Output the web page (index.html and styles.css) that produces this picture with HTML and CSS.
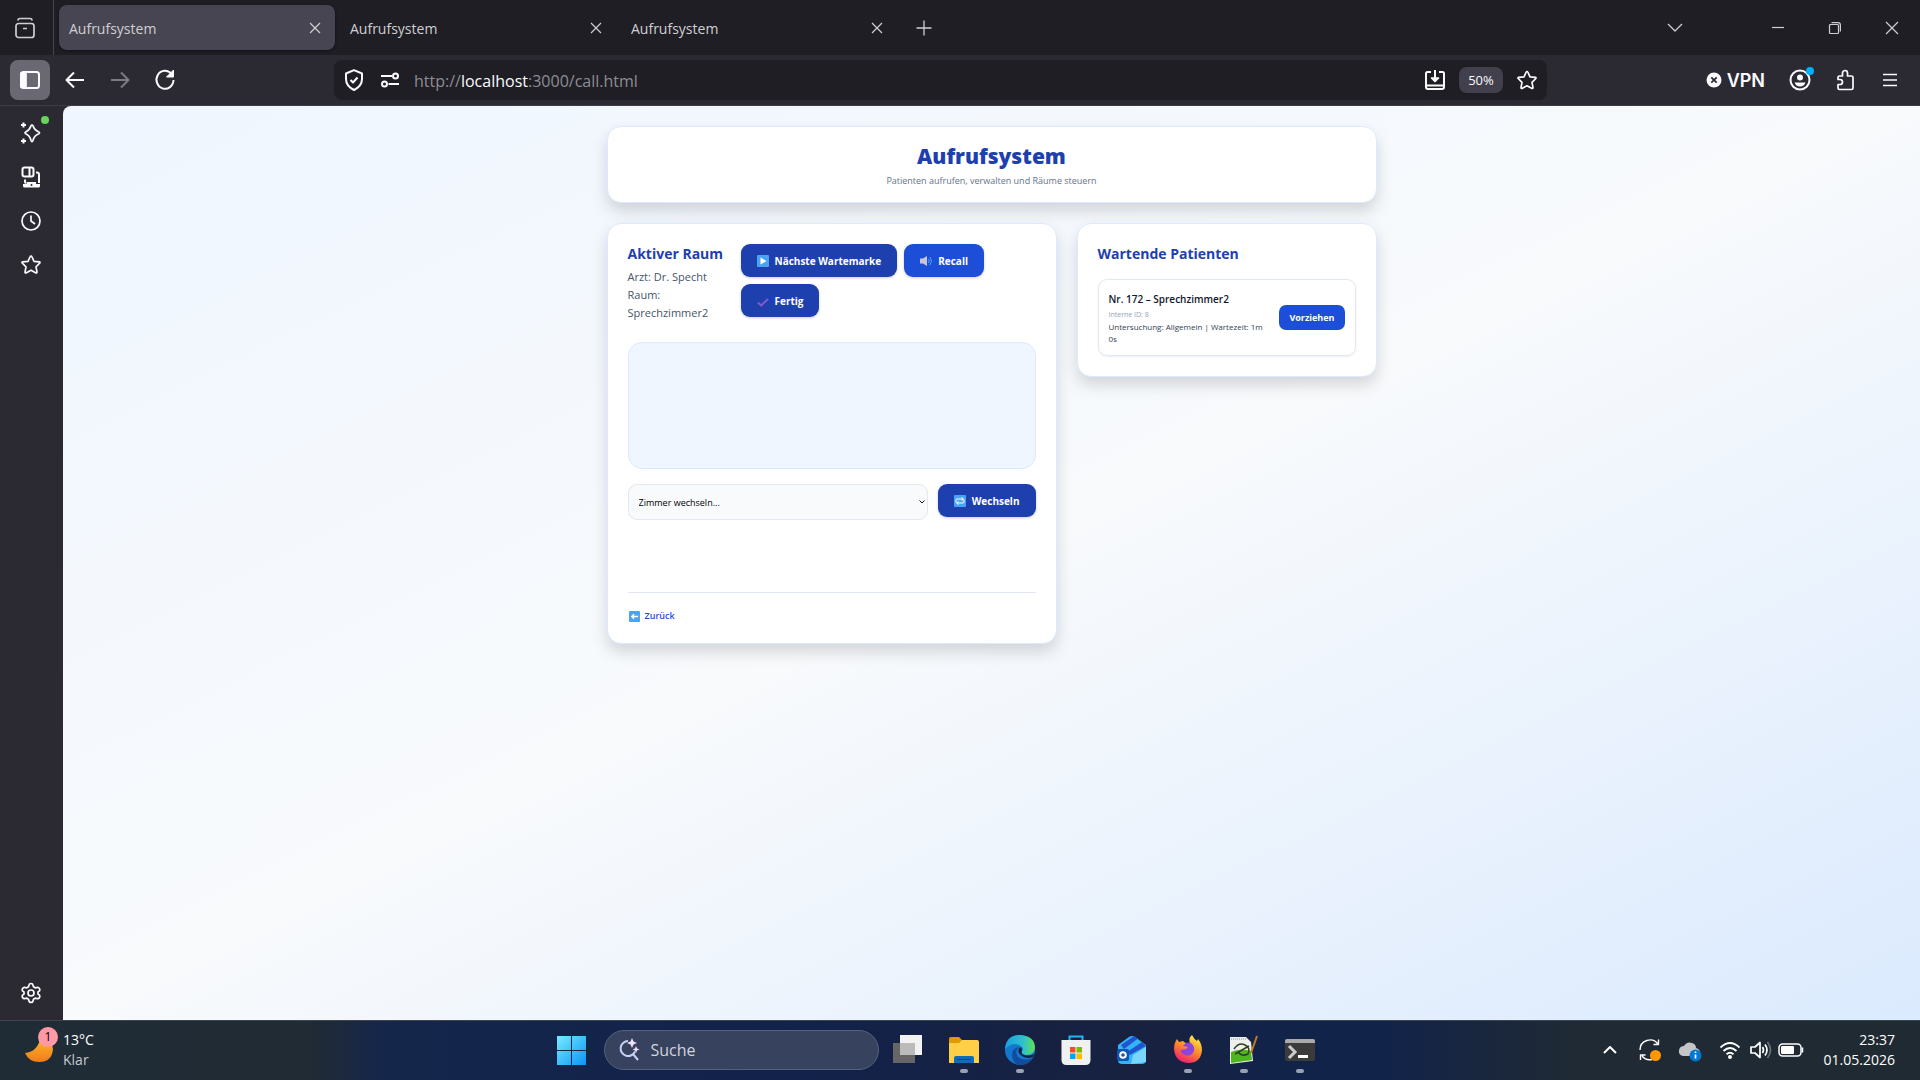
FILE: index.html
```html
<!DOCTYPE html>
<html lang="de">
<head>
    <meta charset="UTF-8">
    <meta name="viewport" content="width=device-width, initial-scale=1.0">
    <title>Aufrufsystem</title>
    <link rel="stylesheet" href="styles.css">
</head>
<body>
    <!-- Tabs -->
    <div class="tabstrip">
        <button class="tab-overview" aria-label="Tabs">
            <svg class="icon" viewBox="0 0 24 24"><rect x="3" y="7.500" width="18" height="14" rx="2.500"/><path d="M5 4.500Q5 2.500 7 2.500H17Q19 2.500 19 4.500M10 12.500h4"/></svg>
        </button>
        <div class="tab active"><span>Aufrufsystem</span><button aria-label="Tab schließen"><svg class="icon small" viewBox="0 0 12 12"><path d="M1 1l10 10M11 1L1 11"/></svg></button></div>
        <div class="tab"><span>Aufrufsystem</span><button aria-label="Tab schließen"><svg class="icon small" viewBox="0 0 12 12"><path d="M1 1l10 10M11 1L1 11"/></svg></button></div>
        <div class="tab"><span>Aufrufsystem</span><button aria-label="Tab schließen"><svg class="icon small" viewBox="0 0 12 12"><path d="M1 1l10 10M11 1L1 11"/></svg></button></div>
        <button class="new-tab" aria-label="Neuer Tab"><svg class="icon medium" viewBox="0 0 16 16"><path d="M8 0.500v15M0.500 8h15"/></svg></button>
        <div class="window-buttons">
            <button class="tab-list" aria-label="Alle Tabs"><svg class="icon medium" viewBox="0 0 16 16"><path d="M1 4l7 7 7-7"/></svg></button>
            <button aria-label="Minimieren"><svg class="icon small" viewBox="0 0 12 12"><path d="M0 5.500h12"/></svg></button>
            <button aria-label="Verkleinern"><svg class="icon small" viewBox="0 0 12 12"><rect x="0.500" y="2.500" width="9" height="9" rx="1"/><path d="M2.500 .7H9Q11.400 .7 11.400 3V9.500"/></svg></button>
            <button aria-label="Schließen"><svg class="icon small" viewBox="0 0 12 12"><path d="M0 0l12 12M12 0L0 12"/></svg></button>
        </div>
    </div>

    <!-- Navigation -->
    <div class="toolbar">
        <button class="tool sidebar-toggle" aria-label="Seitenleiste"><svg class="icon" viewBox="0 0 24 24"><rect x="3" y="4" width="18" height="16" rx="2.500" stroke-width="2"/><path d="M3 5h5v14H3z" fill="currentColor"/></svg></button>
        <button class="tool" aria-label="Zurück"><svg class="icon" viewBox="0 0 24 24"><path d="M21 12H4M11 4.500L3.500 12l7.500 7.500" stroke-width="2"/></svg></button>
        <button class="tool disabled" aria-label="Vor"><svg class="icon" viewBox="0 0 24 24"><path d="M3 12h17M13 4.500l7.500 7.500-7.500 7.500" stroke-width="2"/></svg></button>
        <button class="tool" aria-label="Neu laden"><svg class="icon" viewBox="0 0 24 24"><path d="M18.500 6A8.500 9 0 1 0 20.500 12" stroke-width="2"/><path d="M20.500 2v7h-7z" fill="currentColor" stroke-width="1"/></svg></button>
        <div class="urlbar">
            <svg class="icon" viewBox="0 0 24 24"><path d="M12 2.200l8 3.300v5.500c0 5-3 8.500-8 11-5-2.500-8-6-8-11V5.500z" stroke-width="2"/><path d="M8.500 12l2.500 2.500 4.500-5" stroke-width="2"/></svg>
            <svg class="icon" viewBox="0 0 24 24"><path d="M3 8h11M10.500 16H21" stroke-width="2"/><circle cx="17.500" cy="8" r="2.500" stroke-width="2"/><circle cx="6.500" cy="16" r="2.500" stroke-width="2"/></svg>
            <div class="url">http://<b>localhost</b>:3000/call.html</div>
            <button class="plain" aria-label="App installieren"><svg class="icon" viewBox="0 0 24 24"><path d="M8 4H4.500Q3 4 3 5.500V19Q3 21 5 21H19Q21 21 21 19V5.500Q21 4 19.500 4H16M3 17.500h18M12 2v11" stroke-width="2"/><path d="M8.500 10h7L12 13.500z" fill="currentColor"/></svg></button>
            <button class="zoom-level">50%</button>
            <button class="plain" aria-label="Lesezeichen"><svg class="icon" viewBox="0 0 24 24"><path d="M12 3.500q.6 0 .8.500l2.200 4.800 5.300.6q1.100.2.500 1.100l-3.800 3.800 1 5.300q0 1.200-1 .8L12 17.800l-5 2.600q-1 .4-1-.8l1-5.300-3.800-3.800q-.6-.9.500-1.100L9 8.800 11.200 4q.2-.5.8-.5z"/></svg></button>
        </div>
        <div class="browser-tools">
            <button class="vpn"><svg class="vpn-icon" viewBox="0 0 16 16"><circle cx="8" cy="8" r="7.500" fill="#fbfbfe"/><path d="M5.300 5.300l5.400 5.400M10.700 5.300l-5.400 5.400" stroke="#2b2a33" stroke-width="1.800"/></svg>VPN</button>
            <button class="tool account" aria-label="Konto"><svg class="icon" viewBox="0 0 24 24"><circle cx="12" cy="12" r="9.500" stroke-width="2"/><circle cx="12" cy="9.500" r="3" fill="currentColor" stroke="none"/><path d="M6.500 14.500h11q-1.500 4-5.500 4t-5.500-4z" fill="currentColor" stroke="none"/></svg><i class="dot blue"></i></button>
            <button class="tool" aria-label="Erweiterungen"><svg class="icon" viewBox="0 0 24 24"><path d="M9.500 8V5a2.500 2.500 0 0 1 5 0v3h4q1.500 0 1.500 1.500V20q0 1.500-1.500 1.500h-12Q5 21.500 5 20v-3.500h2a2.500 2.500 0 0 0 0-5H5v-2Q5 8 6.500 8z"/></svg></button>
            <button class="tool" aria-label="Menü"><svg class="icon" viewBox="0 0 24 24"><path d="M5 6.500h14M5 12h14M5 17.500h14"/></svg></button>
        </div>
    </div>

    <div class="window">
        <nav class="sidebar">
            <button aria-label="KI-Chatbot"><svg class="icon" viewBox="0 0 24 24"><path d="M13 4q.7 0 1 .8 1.200 4.200 5.800 6.200 1.500.8 0 1.800-4.600 1.700-5.800 6.500-.4 1.300-1 1.300t-1-1.300q-1.200-4.800-5.300-6.500-1.400-1 0-1.800Q10.800 9 12 4.800q.3-.8 1-.8z"/><path d="M4.500 1.500v5M2 4h5M4.500 17.500v5M2 20h5" stroke-width="2"/></svg><i class="dot green"></i></button>
            <button aria-label="Synchronisierte Tabs"><svg class="icon" viewBox="0 0 24 24"><rect x="3.500" y="2.500" width="11" height="9" rx="2" stroke-width="2"/><path d="M10.500 3v8M17 7.500h1q2 0 2 2v8.500M6 14.500v2q0 1.500 1.500 1.500" stroke-width="2"/><path d="M4 19h17v2q0 1.500-1.500 1.500h-14Q4 22.500 4 21zM8 17h9v3H8z" fill="currentColor" stroke="none"/><circle cx="12.500" cy="20" r="1" fill="#2b2a33" stroke="none"/></svg></button>
            <button aria-label="Chronik"><svg class="icon" viewBox="0 0 24 24"><circle cx="12" cy="12" r="9"/><path d="M12 6.500V12l4 3"/></svg></button>
            <button aria-label="Lesezeichen"><svg class="icon" viewBox="0 0 24 24"><path d="M12 3q.6 0 .8.500l2.200 4.800 5.300.6q1.100.2.500 1.100l-3.800 3.800 1 5.300q0 1.200-1 .8L12 17.300l-5 2.600q-1 .4-1-.8l1-5.300-3.800-3.800q-.6-.9.500-1.100L9 8.300 11.200 3.500q.2-.5.8-.5z"/></svg></button>
            <button class="settings" aria-label="Einstellungen"><svg class="icon" viewBox="0 0 24 24"><path d="M10 4q.3-1.500 2-1.500T14 4l.5 1.800 2 1.100 2-.6q1.300 0 2 1.300t0 2.300L19 11v2l1.500 1.200q.7 1 0 2.300t-2 1.200l-2-.6-2 1.100L14 20q-.3 1.500-2 1.500T10 20l-.5-1.800-2-1.100-2 .6q-1.300 0-2-1.200t0-2.300L5 13v-2L3.500 9.900q-.7-1 0-2.300t2-1.300l2 .6 2-1.100z"/><circle cx="12" cy="12" r="3"/></svg></button>
        </nav>

        <main class="page">
            <div class="container">
                <header class="card header">
                    <h1>Aufrufsystem</h1>
                    <p>Patienten aufrufen, verwalten und Räume steuern</p>
                </header>

                <div class="columns">
                    <section class="card">
                        <div class="room">
                            <div class="room-info">
                                <h2>Aktiver Raum</h2>
                                <p>Arzt: Dr. Specht</p>
                                <p>Raum: Sprechzimmer2</p>
                            </div>
                            <div class="actions">
                                <button class="btn"><svg class="emoji" viewBox="0 0 12 12"><rect width="12" height="12" rx="1" fill="#4ba3f3"/><path d="M3.500 2.500l6 3.500-6 3.500z" fill="#fff"/></svg>Nächste Wartemarke</button>
                                <button class="btn light"><svg class="emoji" viewBox="0 0 12 12"><path d="M0 3.500h3L7 1v10L3 8.500H0z" fill="#c9c5d3"/><path d="M8.500 4q1.500 2 0 4M10 2q3 4 0 8" fill="none" stroke="#4ba3f3"/></svg>Recall</button>
                                <button class="btn"><svg class="emoji" viewBox="0 0 12 12"><path d="M1 7.500l3.200 3L11 4" fill="none" stroke="#8259c8" stroke-width="2"/></svg>Fertig</button>
                            </div>
                        </div>

                        <div class="current"></div>

                        <div class="switch-room">
                            <div class="select">
                                <select aria-label="Zimmer wechseln">
                                    <option>Zimmer wechseln...</option>
                                </select>
                                <svg viewBox="0 0 6 4"><path d="M.5 .5L3 3 5.500 .5" fill="none" stroke="#111"/></svg>
                            </div>
                            <button class="btn"><svg class="emoji" viewBox="0 0 12 12"><rect width="12" height="12" rx="1" fill="#4ba3f3"/><path d="M2 7.500V5q0-1 1-1h6M10 4.500V7q0 1-1 1H3M7.500 2.500L9.500 4 7.500 5.500M4.500 6.500L2.500 8l2 1.500" fill="none" stroke="#fff"/></svg>Wechseln</button>
                        </div>

                        <div class="card-footer">
                            <a href="#"><svg class="emoji" viewBox="0 0 12 12"><rect width="12" height="12" rx="1" fill="#4ba3f3"/><path d="M10 6H3M5.500 3.500L3 6l2.500 2.500" fill="none" stroke="#fff" stroke-width="1.500"/></svg>Zurück</a>
                        </div>
                    </section>

                    <section class="card">
                        <h2>Wartende Patienten</h2>
                        <div class="patient">
                            <div class="patient-info">
                                <h3>Nr. 172 – Sprechzimmer2</h3>
                                <p class="intern">Interne ID: 8</p>
                                <p>Untersuchung: Allgemein | Wartezeit: 1m 0s</p>
                            </div>
                            <button class="btn-small">Vorziehen</button>
                        </div>
                    </section>
                </div>
            </div>
        </main>
    </div>

    <!-- Taskleiste -->
    <footer class="taskbar">
        <div class="weather">
            <div class="moon">
                <svg viewBox="0 0 28 28"><defs><linearGradient id="moon" x2="0" y2="1"><stop offset="0" stop-color="#fbc02d"/><stop offset="1" stop-color="#f27a1a"/></linearGradient></defs><path d="M0 17q13-1 16-17Q28 3 28 13q-1 13-14 13Q4 26 0 17z" fill="url(#moon)"/></svg>
                <span class="badge">1</span>
            </div>
            <div>13°C<br><span class="muted">Klar</span></div>
        </div>

        <div class="apps">
            <button class="app start" aria-label="Start"><svg viewBox="0 0 30 30"><defs><linearGradient id="win" gradientUnits="userSpaceOnUse" x2="30" y2="30"><stop offset="0" stop-color="#7aefff"/><stop offset="1" stop-color="#0a93f5"/></linearGradient></defs><path d="M1 1h14v14H1zM16 1h14v14H16zM1 16h14v14H1zM16 16h14v14H16z" fill="url(#win)"/></svg></button>
            <label class="search">
                <svg viewBox="0 0 24 24"><path d="M11 3a7.500 7.500 0 1 0 7 10.500M16 16l5 6" fill="none" stroke="#c3d2f5" stroke-width="2"/><path d="M15 0l1.500 3.500L20 5l-3.500 1.500L15 10l-1.500-3.500L10 5l3.500-1.500zM19 8l1 2.500 2.500 1-2.500 1-1 2.500-1-2.500-2.500-1 2.500-1z" fill="#f0e2ff"/></svg>
                <input type="text" placeholder="Suche" aria-label="Suche">
            </label>
            <button class="app" aria-label="Taskansicht"><svg viewBox="0 0 30 30"><rect y="8" width="22" height="20" fill="#666"/><rect x="7" width="22" height="20" fill="#f2f2f2"/><path d="M7 8h15v12H7z" fill="#bbb"/></svg></button>
            <button class="app open" aria-label="Explorer"><svg viewBox="0 0 30 30"><path d="M0 4q0-2 2-2h8l3 3v6H0z" fill="#dd9b06"/><path d="M0 8h10l3-3h15q2 0 2 2v21H0z" fill="#ffcf48"/><path d="M5 28v-5q0-2 2-2h16q2 0 2 2v5z" fill="#0f6cbd"/><path d="M8 24.500h14" stroke="#0a4a86"/></svg></button>
            <button class="app open" aria-label="Edge"><svg viewBox="0 0 30 30"><defs><linearGradient id="edge"><stop offset="0" stop-color="#1a9fe0"/><stop offset=".6" stop-color="#2fc0cf"/><stop offset="1" stop-color="#62e052"/></linearGradient></defs><circle cx="15" cy="15" r="15" fill="#1377ce"/><path d="M0 14Q1 0 15 0q15 1 15 13-1 7-8 7-6 0-5-4 2-2 0-4-8-7-17 2z" fill="url(#edge)"/><path d="M14 12q-5 4-1 10 6 5 15 1-5 8-15 7Q7 27 7 20q0-7 7-8z" fill="#104e9d"/><path d="M16 12q-4 2-2 6 5 7 14 4l1-3q-6 3-12 0-1-2 0-4z" fill="#14224a"/></svg></button>
            <button class="app" aria-label="Store"><svg viewBox="0 0 30 30"><path d="M8.500 6V1.500h13V6" fill="none" stroke="#27b4f2" stroke-width="2"/><path d="M.5 5h29v20q0 5-5 5h-19q-5 0-5-5z" fill="#f1f1f1"/><path d="M9 12h5.500v5.500H9z" fill="#f25022"/><path d="M15.500 12H21v5.500h-5.500z" fill="#7fba00"/><path d="M9 18.500h5.500V24H9z" fill="#00a4ef"/><path d="M15.500 18.500H21V24h-5.500z" fill="#ffb900"/></svg></button>
            <button class="app" aria-label="Outlook"><svg viewBox="0 0 30 30"><path d="M1 10L12 2q3-2 6 0l11 8v15q0 4-4 4H5q-4 0-4-4z" fill="#31b5f5"/><path d="M4 10L17 1l4 2.500L7 14zM10 17L25 7l4 4-16 9z" fill="#2354cf"/><path d="M16 20l13-8v15L14 29z" fill="#7bd5ff"/><rect y="14" width="12" height="12" rx="2" fill="#0e54b5"/><circle cx="6" cy="20" r="2.800" fill="none" stroke="#fff" stroke-width="2"/></svg></button>
            <button class="app open" aria-label="Firefox"><svg viewBox="0 0 30 30"><defs><linearGradient id="fox" x1=".8" x2=".3" y2="1"><stop offset="0" stop-color="#fff44f"/><stop offset=".5" stop-color="#ff8a25"/><stop offset="1" stop-color="#f0187a"/></linearGradient></defs><path d="M1 14Q1 8 4 4l2 3 4-1 4 3 3-1q-2-5 2-8 2 4 5 6l1-2q4 5 4 11-1 13-14 13Q2 27 1 14z" fill="url(#fox)"/><path d="M10 11q3-5 8-3 4 3 3 8-3 6-9 4-5-2-4-5l5-1 2-2z" fill="#8c45dd"/></svg></button>
            <button class="app open" aria-label="Notepad++"><svg viewBox="0 0 30 30"><path d="M1 2h16l5 5 2 19L1 29z" fill="#eef0ec"/><path d="M2 17q9-4 20-1l1 9-21 3z" fill="#4db51e"/><path d="M5 14q5-7 11-4t3 9q-6 3-10-2M6 19l14-8" fill="none" stroke="#2f4026" stroke-width="1.500"/><path d="M2 4h15" stroke="#8c9399" stroke-dasharray="1 1"/><path d="M28 1l-6 17" stroke="#c27a1c" stroke-width="2"/></svg></button>
            <button class="app open" aria-label="Terminal"><svg viewBox="0 0 30 30"><rect y="4" width="30" height="22" rx="2" fill="#3b3b3b"/><path d="M0 8V6q0-2 2-2h26q2 0 2 2v2z" fill="#aaa"/><path d="M4 11l6 6-6 6" fill="none" stroke="#ccc" stroke-width="3"/><path d="M13 21.500h10" stroke="#fff" stroke-width="3"/></svg></button>
        </div>

        <div class="tray">
            <svg class="icon" viewBox="0 0 24 24"><path d="M6 15l6-6 6 6" stroke-width="2"/></svg>
            <svg class="icon" viewBox="0 0 24 24"><path d="M2 12A10 10 0 0 1 20 6M20.500 1.500v5h-5M14 21.500A10 10 0 0 1 4 18M2.500 22v-5h5" stroke-width="1.400"/><circle cx="17.500" cy="17.500" r="5.500" fill="#ff9800" stroke="none"/></svg>
            <svg class="icon" viewBox="0 0 24 24"><path d="M5 18Q0 17 1 12q1-4 5-4 3-5 8-3 4 1 4 5 4 1 4 5l-3 3z" fill="#c4c5c7" stroke="none"/><circle cx="17.500" cy="17.500" r="6" fill="#0078d4" stroke="none"/><path d="M17.500 16.500v4M17.500 13.500v1.500"/></svg>
            <div class="status">
                <svg class="icon" viewBox="0 0 24 24"><path d="M2.500 9.500q9.500-9 19 0M5.500 13q6.500-6 13 0M8.500 16.300q3.500-3 7 0" stroke-width="1.800"/><circle cx="12" cy="19" r="2" fill="currentColor" stroke="none"/></svg>
                <svg class="icon" viewBox="0 0 24 24"><path d="M3 9h4l5-4.500v15L7 15H3z"/><path d="M14.500 9q2 3 0 6M17 6.500q4 5.500 0 11"/><path d="M19.500 4q6 8 0 16" stroke="#66707a"/></svg>
                <svg class="battery" viewBox="0 0 26 14"><rect x="1" y="1" width="22" height="12" rx="3.500" fill="none" stroke="#fff" stroke-width="1.500"/><rect x="3" y="3" width="13" height="8" rx="1" fill="#fff"/><path d="M24.500 4.500v5" stroke="#fff" stroke-width="1.500"/></svg>
            </div>
            <div class="clock">23:37<br>01.05.2026</div>
        </div>
    </footer>
</body>
</html>
```
FILE: styles.css
```css
* {
    box-sizing: border-box;
}
body {
    margin: 0;
    height: 100vh;
    display: flex;
    flex-direction: column;
    font-family: "Open Sans", "Noto Sans", sans-serif;
    background-color: #2b2a33;
    color: #fbfbfe;
}
h1, h2, h3, p {
    margin: 0;
}
button {
    font-family: inherit;
    color: inherit;
    background: none;
    border: none;
    padding: 0;
    cursor: pointer;
}
svg {
    display: block;
    flex-shrink: 0;
}
.icon {
    width: 24px;
    height: 24px;
    fill: none;
    stroke: currentColor;
    stroke-width: 1.7;
    stroke-linejoin: round;
}
.icon.small {
    width: 12px;
    height: 12px;
    stroke-width: 1.2;
    overflow: visible;
}
.icon.medium {
    width: 16px;
    height: 16px;
    stroke-width: 1.3;
}

/* Tabs */
.tabstrip {
    display: flex;
    align-items: center;
    height: 55px;
    background-color: #1f1e25;
    color: #cfcfd3;
}
.tab-overview {
    display: flex;
    align-items: center;
    justify-content: center;
    width: 54px;
    height: 100%;
    padding-right: 4px;
    margin-right: 5px;
    border-right: 1px solid #45444d;
}
.tab {
    display: flex;
    align-items: center;
    justify-content: space-between;
    width: 276px;
    height: 45px;
    margin-right: 5px;
    padding: 0 14px 0 10px;
    border-radius: 8px;
    font-size: 14px;
}
.tab span {
    padding-top: 2px;
}
.tab.active {
    background-color: #484552;
    box-shadow: 0 1px 3px rgba(0, 0, 0, 0.5);
}
.new-tab {
    margin-left: 14px;
}
.window-buttons {
    display: flex;
    margin-left: auto;
}
.window-buttons button {
    display: flex;
    align-items: center;
    justify-content: center;
    width: 57px;
    height: 55px;
}
.window-buttons .tab-list {
    margin-right: 46px;
}

/* Toolbar */
.toolbar {
    display: flex;
    align-items: center;
    height: 51px;
    padding: 0 10px;
    border-bottom: 1px solid #3d3b45;
}
.tool {
    position: relative;
    display: flex;
    align-items: center;
    justify-content: center;
    width: 45px;
    height: 40px;
}
.sidebar-toggle {
    width: 40px;
    margin-right: 2px;
    border-radius: 8px;
    background-color: #6a6872;
}
.disabled {
    color: #7c7b83;
}
.urlbar {
    display: flex;
    align-items: center;
    flex: 1;
    height: 40px;
    margin-left: 147px;
    padding: 0 8px;
    gap: 12px;
    border-radius: 8px;
    background-color: #1f1e25;
}
.url {
    flex: 1;
    padding-top: 2px;
    font-size: 16px;
    color: #8e8d94;
}
.url b {
    font-weight: normal;
    color: #fbfbfe;
}
.zoom-level {
    width: 44px;
    height: 26px;
    border-radius: 8px;
    background-color: #42404d;
    font-size: 13px;
}
.browser-tools {
    display: flex;
    align-items: center;
    width: 365px;
    justify-content: flex-end;
    margin-right: -2px;
}
.vpn {
    display: flex;
    align-items: center;
    gap: 5px;
    margin-right: 12px;
    font-family: Inter, sans-serif;
    font-size: 18px;
    font-weight: 600;
}
.vpn-icon {
    width: 16px;
    height: 16px;
}
.dot {
    position: absolute;
    width: 8px;
    height: 8px;
    border-radius: 50%;
}
.dot.blue {
    top: 7px;
    right: 8px;
    background-color: #00b3f4;
}
.dot.green {
    top: -5px;
    right: 1px;
    background-color: #6bd45a;
}

/* Browser window */
.window {
    display: flex;
    flex: 1;
    min-height: 0;
}
.sidebar {
    display: flex;
    flex-direction: column;
    align-items: center;
    gap: 20px;
    width: 63px;
    padding: 15px 1px 15px 0;
}
.sidebar button {
    position: relative;
    padding: 0 7px;
}
.sidebar .settings {
    margin-top: auto;
}
.page {
    flex: 1;
    padding: 20px;
    border-top-left-radius: 8px;
    background: linear-gradient(to bottom right, #eff6ff, #f8fafc 50%, #dbeafe);
    overflow: auto;
    color: #0f172a;
}

/* Aufrufsystem */
.container {
    max-width: 770px;
    margin: 0 auto;
}
.card {
    padding: 20px;
    background-color: #fff;
    border: 1px solid #dbeafe;
    border-radius: 14px;
    box-shadow: 0 8px 16px rgba(0, 0, 0, 0.15);
}
.header {
    height: 77px;
    padding: 15px;
    margin-bottom: 20px;
    text-align: center;
}
.header h1 {
    font-size: 21px;
    line-height: 28px;
    font-weight: 800;
    color: #1e40af;
}
.header p {
    margin-top: 4px;
    font-size: 9px;
    line-height: 14px;
    color: #64748b;
}
.columns {
    display: grid;
    grid-template-columns: 3fr 2fr;
    align-items: start;
    gap: 20px;
}
h2 {
    font-size: 14px;
    line-height: 20px;
    font-weight: 700;
    color: #1e40af;
}
.room {
    display: flex;
    gap: 16px;
    margin-bottom: 20px;
}
.room-info {
    width: 97px;
    flex-shrink: 0;
    font-size: 11px;
    line-height: 18px;
    color: #475569;
}
.room-info p:nth-child(2) {
    margin-top: 4px;
}
.actions {
    display: flex;
    flex-wrap: wrap;
    align-content: flex-start;
    gap: 7px;
}
.btn {
    display: flex;
    align-items: center;
    gap: 6px;
    height: 33px;
    padding: 0 16px;
    border-radius: 9px;
    background-color: #1e40af;
    color: #fff;
    font-size: 10px;
    font-weight: 700;
    box-shadow: 0 1px 3px rgba(0, 0, 0, 0.2);
}
.btn.light {
    background-color: #1d4ed8;
}
.emoji {
    width: 12px;
    height: 12px;
}
.current {
    height: 127px;
    margin-bottom: 15px;
    border: 1px solid #dbeafe;
    border-radius: 14px;
    background-color: #eff6ff;
}
.switch-room {
    display: flex;
    align-items: flex-start;
    gap: 10px;
}
.select {
    position: relative;
    flex: 1;
}
.select select {
    appearance: none;
    display: block;
    width: 100%;
    height: 36px;
    padding: 0 10px;
    border: 1px solid #e2e8f0;
    border-radius: 9px;
    background-color: #f8fafc;
    font-family: inherit;
    font-size: 9px;
    color: #000;
}
.select svg {
    position: absolute;
    top: 16px;
    right: 3px;
    width: 6px;
    height: 4px;
    pointer-events: none;
}
.card-footer {
    margin-top: 72px;
    padding-top: 16px;
    border-top: 1px solid #e2e8f0;
}
.card-footer a {
    display: flex;
    align-items: center;
    gap: 5px;
    padding-left: 1px;
    font-size: 9px;
    line-height: 14px;
    font-weight: 600;
    color: #1d4ed8;
    text-decoration: none;
}
.card-footer .emoji {
    width: 11px;
    height: 11px;
}
.patient {
    display: flex;
    align-items: center;
    justify-content: space-between;
    gap: 10px;
    margin-top: 15px;
    padding: 10px;
    border: 1px solid #e2e8f0;
    border-radius: 9px;
    box-shadow: 0 1px 2px rgba(0, 0, 0, 0.08);
}
.patient-info {
    font-size: 8px;
    line-height: 12px;
    color: #334155;
}
.patient h3 {
    font-size: 10px;
    line-height: 18px;
    font-weight: 600;
    color: #0f172a;
}
.patient .intern {
    font-size: 7px;
    line-height: 13px;
    color: #94a3b8;
}
.btn-small {
    flex-shrink: 0;
    height: 25px;
    padding: 0 10px;
    border-radius: 7px;
    background-color: #1d4ed8;
    color: #fff;
    font-size: 9px;
    font-weight: 700;
}

/* Taskleiste */
.taskbar {
    display: grid;
    grid-template-columns: 1fr auto 1fr;
    align-items: center;
    height: 60px;
    padding: 0 25px 1px;
    border-top: 1px solid #3b4650;
    background: linear-gradient(to right, #1f2c36, #212b34 16%, #15264b 20%, #12224b 40%, #18213f 60%, #12234a 66%, #12234a 72%, #1f2a34 82%, #1f2a33);
    font-size: 14px;
    line-height: 20px;
    color: #fff;
}
.weather {
    display: flex;
    align-items: center;
    gap: 10px;
}
.moon {
    position: relative;
    width: 28px;
    height: 28px;
}
.badge {
    position: absolute;
    top: -9px;
    left: 13px;
    width: 20px;
    height: 20px;
    border-radius: 50%;
    background-color: #ff99a4;
    color: #000;
    font-size: 12px;
    text-align: center;
}
.muted {
    color: #c5c9cc;
}
.apps {
    display: flex;
    align-items: center;
    gap: 26px;
    margin-right: 50px;
}
.app {
    position: relative;
    width: 30px;
    height: 30px;
}
.app.open::after {
    content: "";
    position: absolute;
    left: 11px;
    bottom: -8px;
    width: 8px;
    height: 4px;
    border-radius: 2px;
    background-color: #9aa1b2;
}
.search {
    display: flex;
    align-items: center;
    gap: 10px;
    width: 275px;
    height: 40px;
    margin: 0 -12px 0 -8px;
    padding: 0 12px;
    border: 1px solid #56617d;
    border-radius: 20px;
    background-color: #37425f;
}
.search svg {
    width: 24px;
    height: 24px;
}
.search input {
    width: 100%;
    padding: 0;
    border: none;
    background: none;
    font-family: inherit;
    font-size: 16px;
    color: #fff;
}
.search input::placeholder {
    color: #d0d4dd;
}
.tray {
    display: flex;
    align-items: center;
    justify-content: flex-end;
    gap: 16px;
}
.status {
    display: flex;
    align-items: center;
    gap: 6px;
}
.battery {
    width: 26px;
    height: 14px;
}
.clock {
    text-align: right;
    margin-left: 4px;
}
```
